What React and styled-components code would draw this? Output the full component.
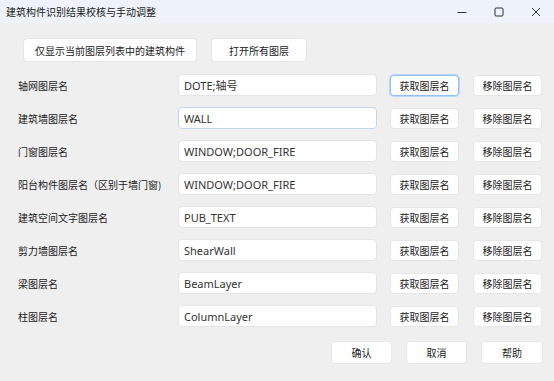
import React from 'react';
import styled, { createGlobalStyle } from 'styled-components';

const GlobalStyle = createGlobalStyle`
  html, body {
    margin: 0;
    padding: 0;
    background: #efefef;
  }
  body {
    font-family: "Noto Sans", "Noto Sans CJK SC", sans-serif;
    color: #222;
  }
`;

const Window = styled.div`
  width: 554px;
  height: 381px;
  background: #efefef;
  display: flex;
  flex-direction: column;
  overflow: hidden;
`;

const TitleBar = styled.div`
  height: 23px;
  background: #eef2f9;
  display: flex;
  align-items: center;
  padding-left: 6px;
  font-size: 10px;
  color: #1a1a1a;
`;

const TitleText = styled.div`
  flex: 1;
  font-family: "Noto Sans CJK SC", sans-serif;
`;

const Controls = styled.div`
  display: flex;
  height: 100%;
`;

const ControlBtn = styled.div`
  width: 37px;
  height: 100%;
  display: flex;
  align-items: center;
  justify-content: center;
  color: #333;
`;

const Body = styled.div`
  flex: 1;
  display: flex;
  flex-direction: column;
  padding: 15px 11px 0 18px;
`;

const TopBar = styled.div`
  display: flex;
  gap: 14px;
  padding-left: 5px;
  margin-bottom: 12px;
`;

const Button = styled.button`
  box-sizing: border-box;
  height: ${(p) => p.h || 21}px;
  width: ${(p) => (p.w ? `${p.w}px` : 'auto')};
  padding: 0;
  background: #fff;
  border: 1px solid ${(p) => (p.focused ? '#92c1f2' : '#e6e6e6')};
  box-shadow: ${(p) => (p.focused ? '0 0 0 1px #b9d8f8' : 'none')};
  border-radius: 4px;
  font-family: "Noto Sans CJK SC", sans-serif;
  font-size: 10px;
  color: #222;
  display: flex;
  align-items: center;
  justify-content: center;
  white-space: nowrap;
`;

const Grid = styled.div`
  display: grid;
  grid-template-columns: 160px 199px 82px 83px;
  row-gap: 11px;
  align-items: center;
`;

const Label = styled.div`
  font-family: "Noto Sans CJK SC", sans-serif;
  font-size: 10px;
  color: #222;
  white-space: nowrap;
`;

const Input = styled.div`
  box-sizing: border-box;
  height: 22px;
  background: #fff;
  border: 1px solid ${(p) => (p.active ? '#c3d6ee' : '#e4e4e4')};
  border-radius: 4px;
  padding-left: 5px;
  display: flex;
  align-items: center;
  font-family: "Noto Sans", "Noto Sans CJK SC", sans-serif;
  font-size: 11px;
  color: #333;
`;

const Cell = styled.div`
  display: flex;
  justify-content: flex-end;
`;

const Footer = styled.div`
  display: flex;
  justify-content: flex-end;
  gap: 14px;
  margin-top: 14px;
`;

const rows = [
  ['轴网图层名', 'DOTE;轴号'],
  ['建筑墙图层名', 'WALL'],
  ['门窗图层名', 'WINDOW;DOOR_FIRE'],
  ['阳台构件图层名（区别于墙门窗)', 'WINDOW;DOOR_FIRE'],
  ['建筑空间文字图层名', 'PUB_TEXT'],
  ['剪力墙图层名', 'ShearWall'],
  ['梁图层名', 'BeamLayer'],
  ['柱图层名', 'ColumnLayer'],
];

export default function App() {
  return (
    <>
      <GlobalStyle />
      <Window>
        <TitleBar>
          <TitleText>建筑构件识别结果校核与手动调整</TitleText>
          <Controls>
            <ControlBtn>
              <svg width="10" height="10" viewBox="0 0 10 10">
                <path d="M0.5 5.5h9" stroke="#333" strokeWidth="1" />
              </svg>
            </ControlBtn>
            <ControlBtn>
              <svg width="10" height="10" viewBox="0 0 10 10">
                <rect x="1" y="1" width="8" height="8" rx="1" fill="none" stroke="#333" strokeWidth="1" />
              </svg>
            </ControlBtn>
            <ControlBtn>
              <svg width="10" height="10" viewBox="0 0 10 10">
                <path d="M1 1l8 8M9 1l-8 8" stroke="#333" strokeWidth="1" />
              </svg>
            </ControlBtn>
          </Controls>
        </TitleBar>
        <Body>
          <TopBar>
            <Button h={24} w={174}>仅显示当前图层列表中的建筑构件</Button>
            <Button h={24} w={96}>打开所有图层</Button>
          </TopBar>
          <Grid>
            {rows.map(([label, value], i) => (
              <React.Fragment key={label}>
                <Label>{label}</Label>
                <Input active={i === 1}>{value}</Input>
                <Cell>
                  <Button w={69} h={21} focused={i === 0}>获取图层名</Button>
                </Cell>
                <Cell>
                  <Button w={69} h={21}>移除图层名</Button>
                </Cell>
              </React.Fragment>
            ))}
          </Grid>
          <Footer>
            <Button w={61} h={23}>确认</Button>
            <Button w={61} h={23}>取消</Button>
            <Button w={62} h={23}>帮助</Button>
          </Footer>
        </Body>
      </Window>
    </>
  );
}
